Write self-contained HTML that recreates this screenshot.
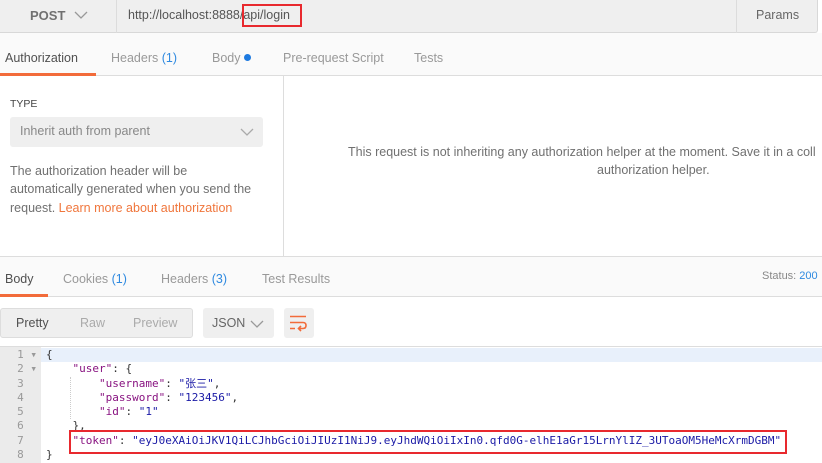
<!DOCTYPE html>
<html><head><meta charset="utf-8"><style>
*{margin:0;padding:0;box-sizing:border-box}
body{width:822px;height:463px;overflow:hidden;background:#fff;font-family:"Liberation Sans","Noto Sans CJK SC",sans-serif;font-size:12px;color:#505050;position:relative}
.a{position:absolute;white-space:nowrap}
.mono{font-family:"DejaVu Sans Mono","Liberation Mono","Noto Sans CJK SC",monospace;font-size:11px}
.k{color:#881280}.s{color:#1a1aa6}.p{color:#333}
</style></head><body>
<!-- top bar -->
<div class="a" style="left:0;top:0;width:818px;height:33px;background:#efefef;border-bottom:1px solid #d8d8d8;border-right:1px solid #d8d8d8;border-radius:0 0 3px 0"></div>
<div class="a" style="left:116px;top:0;width:1px;height:33px;background:#dcdcdc"></div>
<div class="a" style="left:736px;top:0;width:1px;height:33px;background:#dcdcdc"></div>
<div class="a" style="left:30px;top:8px;font-size:13px;color:#707070;font-weight:bold">POST</div>
<svg class="a" style="left:74px;top:10px" width="14" height="10"><path d="M1 2 L7 8 L13 2" fill="none" stroke="#999" stroke-width="1.3"/></svg>
<div class="a" style="left:128px;top:8px;font-size:12.5px;color:#555">http://localhost:8888/api/login</div>
<div class="a" style="left:242px;top:4px;width:60px;height:23px;border:2px solid #e8292e"></div>
<div class="a" style="left:756px;top:8px;font-size:12.5px;color:#666">Params</div>
<!-- tabs -->
<div class="a" style="left:0;top:33px;width:822px;height:43px;background:#fafafa;border-bottom:1px solid #ddd"></div>
<div class="a" style="left:5px;top:51px;font-size:12.5px;color:#505050">Authorization</div>
<div class="a" style="left:0;top:73px;width:96px;height:3px;background:#f26b3a"></div>
<div class="a" style="left:111px;top:51px;font-size:12.5px;color:#999">Headers <span style="color:#2f8ae0">(1)</span></div>
<div class="a" style="left:212px;top:51px;font-size:12.5px;color:#999">Body <span style="display:inline-block;width:7px;height:7px;border-radius:50%;background:#1d7ae0;vertical-align:1px"></span></div>
<div class="a" style="left:283px;top:51px;font-size:12.5px;color:#999">Pre-request Script</div>
<div class="a" style="left:414px;top:51px;font-size:12.5px;color:#999">Tests</div>
<!-- auth panel -->
<div class="a" style="left:283px;top:76px;width:1px;height:180px;background:#ddd"></div>
<div class="a" style="left:10px;top:98px;font-size:10.5px;color:#444">TYPE</div>
<div class="a" style="left:10px;top:117px;width:253px;height:30px;background:#efefef;border-radius:3px"></div>
<div class="a" style="left:20px;top:124px;font-size:12.5px;color:#888">Inherit auth from parent</div>
<svg class="a" style="left:240px;top:127px" width="14" height="10"><path d="M1 2 L7 8 L13 2" fill="none" stroke="#aaa" stroke-width="1.3"/></svg>
<div class="a" style="left:10px;top:162px;font-size:12.5px;line-height:18.3px;color:#707070;white-space:normal;width:270px">The authorization header will be<br>automatically generated when you send the<br>request. <span style="color:#f0763c">Learn more about authorization</span></div>
<div class="a" style="left:348px;top:145px;font-size:12.5px;color:#707070">This request is not inheriting any authorization helper at the moment. Save it in a coll</div>
<div class="a" style="left:597px;top:163px;font-size:12.5px;color:#707070">authorization helper.</div>
<!-- response tabs -->
<div class="a" style="left:0;top:256px;width:822px;height:41px;background:#fafafa;border-top:1px solid #ddd;border-bottom:1px solid #ddd"></div>
<div class="a" style="left:5px;top:272px;font-size:12.5px;color:#505050">Body</div>
<div class="a" style="left:0;top:294px;width:48px;height:3px;background:#f26b3a"></div>
<div class="a" style="left:63px;top:272px;font-size:12.5px;color:#999">Cookies <span style="color:#2f8ae0">(1)</span></div>
<div class="a" style="left:161px;top:272px;font-size:12.5px;color:#999">Headers <span style="color:#2f8ae0">(3)</span></div>
<div class="a" style="left:262px;top:272px;font-size:12.5px;color:#999">Test Results</div>
<div class="a" style="left:762px;top:270px;font-size:11px;color:#888">Status: <span style="color:#2f8ae0">200</span></div>
<!-- toolbar -->
<div class="a" style="left:0;top:308px;width:193px;height:30px;background:#efefef;border:1px solid #ddd;border-radius:3px"></div>
<div class="a" style="left:16px;top:316px;font-size:12.5px;color:#505050">Pretty</div>
<div class="a" style="left:80px;top:316px;font-size:12.5px;color:#aaa">Raw</div>
<div class="a" style="left:133px;top:316px;font-size:12.5px;color:#aaa">Preview</div>
<div class="a" style="left:203px;top:308px;width:71px;height:30px;background:#efefef;border-radius:3px"></div>
<div class="a" style="left:212px;top:316px;font-size:12.5px;color:#666">JSON</div>
<svg class="a" style="left:250px;top:319px" width="14" height="10"><path d="M1 2 L7 8 L13 2" fill="none" stroke="#999" stroke-width="1.3"/></svg>
<div class="a" style="left:284px;top:308px;width:30px;height:30px;background:#efefef;border-radius:3px"></div>
<svg class="a" style="left:289px;top:314px" width="20" height="18"><path d="M1 2.5 H17 M1 8.5 H14 Q17 8.5 17 11.5 Q17 14.5 14 14.5 H10 M1 14.5 H6 M12 12 L9.5 14.5 L12 17" fill="none" stroke="#f26b3a" stroke-width="1.6"/></svg>
<!-- code -->
<div class="a" style="left:0;top:346px;width:822px;height:1px;background:#ddd"></div>
<div class="a" style="left:0;top:347px;width:41px;height:116px;background:#ebebeb"></div>
<div class="a" style="left:41px;top:348px;width:781px;height:14px;background:#e8f0fb"></div>
<div class="a mono" style="left:0;top:348px;width:41px;line-height:14.3px;color:#999;text-align:right;padding-right:4px;white-space:pre">1 ▾
2 ▾
3  
4  
5  
6  
7  
8  </div>
<div class="a" style="left:70px;top:377px;width:0;height:42px;border-left:1px dotted #ccc"></div>
<div class="a mono" style="left:46px;top:348px;line-height:14.3px;white-space:pre;color:#333">{
    <span class="k">"user"</span>: {
        <span class="k">"username"</span>: <span class="s">"张三"</span>,
        <span class="k">"password"</span>: <span class="s">"123456"</span>,
        <span class="k">"id"</span>: <span class="s">"1"</span>
    },
    <span class="k">"token"</span>: <span class="s">"eyJ0eXAiOiJKV1QiLCJhbGciOiJIUzI1NiJ9.eyJhdWQiOiIxIn0.qfd0G-elhE1aGr15LrnYlIZ_3UToaOM5HeMcXrmDGBM"</span>
}</div>
<div class="a" style="left:69px;top:430px;width:718px;height:24px;border:2px solid #e8292e"></div>
</body></html>
